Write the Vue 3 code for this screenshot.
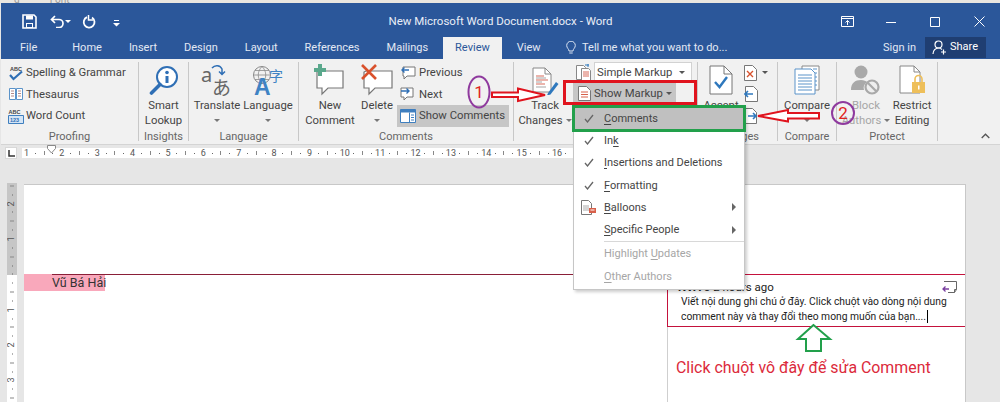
<script setup>
const tabs = ['Home', 'Insert', 'Design', 'Layout', 'References', 'Mailings', 'Review', 'View']
const hCells = []
for (let n = 1; n <= 17; n++) {
  hCells.push({ t: String(n), c: 'num' }, { t: '', c: 'dot' }, { t: '', c: 'tick' }, { t: '', c: 'dot' })
}
const vCells = []
for (let q = -10; q <= 16; q++) {
  const m = ((q % 4) + 4) % 4
  if (q === 0) vCells.push({ t: '', c: 'dot' })
  else if (m === 0) vCells.push({ t: String(Math.abs(q) / 4), c: 'num' })
  else if (m === 2) vCells.push({ t: '', c: 'tick' })
  else vCells.push({ t: '', c: 'dot' })
}
const menu = [
  { k: 'C', r: 'omments', check: true, active: true },
  { p: 'In', k: 'k', r: '', check: true },
  { k: 'I', r: 'nsertions and Deletions', check: true },
  { k: 'F', r: 'ormatting', check: true },
  { k: 'B', r: 'alloons', sub: true, balloon: true },
  { k: 'S', r: 'pecific People', sub: true },
  { sep: true },
  { p: 'Highlight ', k: 'U', r: 'pdates', off: true },
  { k: 'O', r: 'ther Authors', off: true }
]
</script>

<template>
  <div class="app">
    <div class="strip"><span>g</span><span>Font</span></div>

    <header class="titlebar">
      <div class="qat">
        <svg width="15" height="15" viewBox="0 0 15 15"><path d="M1 1h11l2 2v11H1z" fill="none" stroke="#fff" stroke-width="1.6"/><path d="M4 1.500h7v4H4zM4 9h7v5H4z" fill="#fff"/><path d="M5 10h5v3H5z" fill="#2b579a"/></svg>
        <svg class="q-undo" width="15" height="13" viewBox="0 0 15 13"><path d="M5 1 1.500 4.500 5 8M2 4.500h7a4 4 0 0 1 0 8H6" fill="none" stroke="#fff" stroke-width="1.700"/></svg>
        <i class="caret white q-c1"></i>
        <svg class="q-redo" width="14" height="14" viewBox="0 0 14 14"><path d="M5 2.200a5.400 5.400 0 1 0 5 .4" fill="none" stroke="#fff" stroke-width="1.800"/><path d="M6.500 0v5H11" fill="none" stroke="#fff" stroke-width="1.500"/></svg>
        <svg class="q-cust" width="7" height="7" viewBox="0 0 7 7"><path d="M1 0h5v1H1zM0 3h7L3.500 6.500z" fill="#fff"/></svg>
      </div>
      <div class="doc-title">New Microsoft Word Document.docx - Word</div>
      <div class="winctl">
        <svg width="13" height="11" viewBox="0 0 13 11"><path d="M.5.500h12v10H.5zM.5 2.500h12" fill="none" stroke="#fff"/><path d="M6.500 9V4.500M4.500 6.500l2-2 2 2" fill="none" stroke="#fff"/></svg>
        <svg width="10" height="10" viewBox="0 0 10 10"><path d="M0 5.500h10" stroke="#fff"/></svg>
        <svg width="10" height="10" viewBox="0 0 10 10"><path d="M.5.500h9v9h-9z" fill="none" stroke="#fff"/></svg>
        <svg width="11" height="11" viewBox="0 0 11 11"><path d="m.5.500 10 10M10.500.500l-10 10" stroke="#fff"/></svg>
      </div>
    </header>

    <nav class="tabbar">
      <span class="tab file">File</span>
      <span v-for="t in tabs" :key="t" class="tab" :class="{ active: t === 'Review' }">{{ t }}</span>
      <span class="tell">
        <svg width="10" height="14" viewBox="0 0 10 14"><path d="M3 10C3 8 .7 7 .7 4.500a4.300 4.300 0 0 1 8.600 0C9.300 7 7 8 7 10zM3.300 12h3.400" fill="none" stroke="#dbe4f3"/></svg>
        Tell me what you want to do...
      </span>
      <span class="signin">Sign in</span>
      <span class="share">
        <svg width="15" height="15" viewBox="0 0 15 15"><circle cx="6.500" cy="4.500" r="3.500" fill="none" stroke="#fff" stroke-width="1.200"/><path d="M1 14c0-3.500 2.500-6 5.500-6 1.500 0 2.500.5 3.500 1.500M11.500 9.500v5M9 12h5" fill="none" stroke="#fff" stroke-width="1.200"/></svg>
        Share
      </span>
    </nav>

    <section class="ribbon">
      <div class="group g-proof">
        <div class="body col pad-proof">
          <div class="sm">
            <svg width="16" height="16" viewBox="0 0 16 16"><text x="2" y="6" class="mini">ABC</text><path d="M2 10l3.500 4L14 6.500" fill="none" stroke="#2f6fb5" stroke-width="2.200"/></svg>
            <span>Spelling &amp; Grammar</span>
          </div>
          <div class="sm">
            <svg width="16" height="16" viewBox="0 0 16 16"><path d="M1.500 2.500h6v11h-6zM8.500 2.500h6v11h-6z" fill="#fff" stroke="#5b93c9"/><path d="M3 5h3M3 7.500h3M3 10h3M10 5h3M10 7.500h3M10 10h3" stroke="#b48a8a"/></svg>
            <span>Thesaurus</span>
          </div>
          <div class="sm">
            <svg width="16" height="17" viewBox="0 0 16 17"><text x="0.500" y="6.500" class="mini dark">ABC</text><path d="M.5 8.500h15v8H.5z" fill="#d5e5f5" stroke="#3f7fbf"/><text x="2" y="15" class="mini blue">123</text></svg>
            <span>Word Count</span>
          </div>
        </div>
        <div class="label">Proofing</div>
      </div>

      <div class="group g-ins">
        <div class="body center">
          <div class="lg">
            <div class="ic">
              <svg width="30" height="30" viewBox="0 0 30 30"><circle cx="18" cy="12" r="10" fill="#fff" stroke="#2f6fb5" stroke-width="2"/><path d="M11 19.500 2.500 28" stroke="#2f6fb5" stroke-width="3.600" stroke-linecap="round"/><path d="M16.500 11h3v7h-3z" fill="#2f6fb5"/><circle cx="18" cy="7.500" r="1.800" fill="#2f6fb5"/></svg>
            </div>
            <span>Smart</span><span>Lookup</span>
          </div>
        </div>
        <div class="label">Insights</div>
      </div>

      <div class="group g-lang">
        <div class="body lang-body">
          <div class="lg w-lang">
            <div class="ic">
              <svg width="34" height="34" viewBox="0 0 34 34"><text x="1" y="19" class="glyph-a">a</text><text x="12" y="32" class="glyph-jp">あ</text><path d="M12 5c3-3.500 8-3 10 1v5M19 8.500l3 3 3-3" fill="none" stroke="#2f6fb5" stroke-width="1.500"/></svg>
            </div>
            <span>Translate</span><i class="caret"></i>
          </div>
          <div class="lg w-lang2">
            <div class="ic">
              <svg width="34" height="34" viewBox="0 0 34 34"><circle cx="11" cy="12" r="8.500" fill="none" stroke="#8a8a8a"/><path d="M2.500 12h17M11 3.500c-5 5-5 12 0 17M11 3.500c5 5 5 12 0 17M4 7.500h14M4 16.500h14" fill="none" stroke="#8a8a8a" stroke-width=".8"/><text x="3" y="32" class="glyph-big">A</text><text x="18" y="18" class="glyph-zh">字</text></svg>
            </div>
            <span>Language</span><i class="caret"></i>
          </div>
        </div>
        <div class="label">Language</div>
      </div>

      <div class="group g-com">
        <div class="body">
          <div class="lg w-new">
            <div class="ic">
              <svg width="34" height="34" viewBox="0 0 34 34"><path d="M6 8h24v17H15l-6 6v-6H4V9z" fill="#fff" stroke="#777" stroke-width="1.200"/><path d="M5 1h4v4h4v4H9v4H5V9H1V5h4z" fill="#5aa88c"/></svg>
            </div>
            <span>New</span><span>Comment</span>
          </div>
          <div class="lg w-del">
            <div class="ic">
              <svg width="34" height="34" viewBox="0 0 34 34"><path d="M6 8h26v17H15l-6 6v-6H4V9z" fill="#fff" stroke="#777" stroke-width="1.200"/><path d="m2 2 14 14M16 2 2 16" stroke="#d9512c" stroke-width="2.600"/></svg>
            </div>
            <span>Delete</span><i class="caret"></i>
          </div>
          <div class="col com-col">
            <div class="sm in3">
              <svg width="16" height="16" viewBox="0 0 16 16"><path d="M3 2h12v9H7l-3 3v-3H3z" fill="#fff" stroke="#777"/><path d="M9 5H2M4.500 2.500 2 5l2.500 2.500" fill="none" stroke="#2f6fb5" stroke-width="1.400"/></svg>
              <span>Previous</span>
            </div>
            <div class="sm in3">
              <svg width="16" height="16" viewBox="0 0 16 16"><path d="M1 2h12v9H7l-3 3v-3H1z" fill="#fff" stroke="#777"/><path d="M1 5h8M6.500 2.500 9 5 6.500 7.500" fill="none" stroke="#2f6fb5" stroke-width="1.400"/></svg>
              <span>Next</span>
            </div>
            <div class="sm in3 hl">
              <svg width="16" height="14" viewBox="0 0 16 14"><path d="M.5.500h15v13H.5z" fill="#fff" stroke="#3f7fbf"/><path d="M.5.500h15v3H.5z" fill="#3f7fbf"/><path d="M9.500 3.500v10M11 6h3M11 8.500h3M11 11h3" stroke="#3f7fbf"/></svg>
              <span>Show Comments</span>
            </div>
          </div>
        </div>
        <div class="label">Comments</div>
      </div>

      <div class="group g-track">
        <div class="body">
          <div class="lg w-track">
            <div class="ic">
              <svg width="28" height="30" viewBox="0 0 28 30"><path d="M2 3h12l6 6v18H2z" fill="#fff" stroke="#888"/><path d="M14 3v6h6" fill="none" stroke="#888"/><path d="M5 11h8M5 15h12M5 19h9" stroke="#d86a5a" stroke-width="1.200"/><path d="M5 13h10M5 17h6M5 22h10" stroke="#a5a5a5"/><path d="m17 28 8-11 2.500 2-8 10.500-3.500 1z" fill="#2f78bd"/></svg>
            </div>
            <span>Track</span><span class="with-caret">Changes<i class="caret"></i></span>
          </div>
          <div class="col track-col">
            <div class="mark-row">
              <svg width="15" height="17" viewBox="0 0 15 17"><path d="M.5 1.500h7l2 2v12H.5z" fill="#fff" stroke="#888"/><path d="M5.500 4.500h7l2 2v10h-9z" fill="#fff" stroke="#888"/><path d="M7 8h6M7 10h6M7 12h6" stroke="#d86a5a"/><path d="M9 1h4M12 0v3" stroke="#2f78bd"/></svg>
              <div class="select"><span>Simple Markup</span><i class="caret"></i></div>
            </div>
            <div class="showmarkup">
              <svg width="13" height="15" viewBox="0 0 13 15"><path d="M.5.500h8l4 4v10H.5z" fill="#fff" stroke="#777"/><path d="M3 6h7M3 8.500h7M3 11h7" stroke="#d8604a"/></svg>
              <span>Show Markup</span><i class="caret dark"></i>
            </div>
          </div>
        </div>
        <div class="label"></div>
      </div>

      <div class="group g-chg">
        <div class="body">
          <div class="lg w-acc">
            <div class="ic">
              <svg width="24" height="30" viewBox="0 0 24 30"><path d="M1 1h14l8 8v20H1z" fill="#fff" stroke="#777"/><path d="M15 1v8h8" fill="none" stroke="#777"/><path d="m6 17 4.500 5L18 12" fill="none" stroke="#2f78bd" stroke-width="2.400"/></svg>
            </div>
            <span>Accept</span>
          </div>
          <div class="col chg-col">
            <div class="chg">
              <svg width="14" height="16" viewBox="0 0 14 16"><path d="M.5.500h8l4 4v11H.5z" fill="#fff" stroke="#777"/><path d="m3 6 6 6M9 6l-6 6" stroke="#d8512c" stroke-width="1.400"/></svg>
              <i class="caret dark"></i>
            </div>
            <div class="chg">
              <svg width="14" height="16" viewBox="0 0 14 16"><path d="M1.500.500h8l4 4v11h-12z" fill="#fff" stroke="#777"/><path d="M9 8H1M4 5 1 8l3 3" fill="none" stroke="#2f78bd" stroke-width="1.600"/></svg>
            </div>
            <div class="chg">
              <svg width="14" height="16" viewBox="0 0 14 16"><path d="M.5.500h8l4 4v11H.5z" fill="#fff" stroke="#777"/><path d="M4 8h8M9 5l3 3-3 3" fill="none" stroke="#2f78bd" stroke-width="1.600"/></svg>
            </div>
          </div>
        </div>
        <div class="label chg-label">Changes</div>
      </div>

      <div class="group g-cmp">
        <div class="body center">
          <div class="lg">
            <div class="ic">
              <svg width="26" height="30" viewBox="0 0 26 30"><path d="M8 1h17v24H8z" fill="#fff" stroke="#888"/><path d="M1 4h16l4 4v21H1z" fill="#fff" stroke="#5b93c9"/><path d="M4 10h14M4 13h14M4 16h14M4 19h14M4 22h14M4 25h14M19 4h4M21 8h2M21 12h2M21 16h2M21 20h2" stroke="#5b93c9"/></svg>
            </div>
            <span>Compare</span><i class="caret"></i>
          </div>
        </div>
        <div class="label">Compare</div>
      </div>

      <div class="group g-prot">
        <div class="body">
          <div class="lg w-block off">
            <div class="ic">
              <svg width="30" height="30" viewBox="0 0 30 30"><circle cx="10" cy="7" r="6.500" fill="#a9a9a9"/><path d="M0 25c0-7 4-10 10-10 3 0 5 1 6 2-3 2-4 5-3 8z" fill="#a9a9a9"/><circle cx="21" cy="22" r="6.500" fill="#eee" stroke="#a9a9a9" stroke-width="2.200"/><path d="m16.500 17.500 9 9" stroke="#a9a9a9" stroke-width="2.200"/></svg>
            </div>
            <span>Block</span><span class="with-caret">Authors<i class="caret"></i></span>
          </div>
          <div class="lg w-rest">
            <div class="ic">
              <svg width="30" height="30" viewBox="0 0 30 30"><path d="M3 1h14l6 6v21H3z" fill="#fff" stroke="#888"/><path d="M17 1v6h6" fill="none" stroke="#888"/><path d="M15 17h13v11H15z" fill="#eebf5a"/><path d="M18 17v-3a3.500 3.500 0 0 1 7 0v3" fill="none" stroke="#eebf5a" stroke-width="1.600"/><path d="M21 20.500h1.500v4H21z" fill="#fff"/></svg>
            </div>
            <span>Restrict</span><span>Editing</span>
          </div>
        </div>
        <div class="label">Protect</div>
      </div>

      <div class="tail">
        <svg width="9" height="6" viewBox="0 0 9 6"><path d="m.7 5 3.800-3.800L8.300 5" fill="none" stroke="#555" stroke-width="1.300"/></svg>
      </div>
    </section>

    <main class="work">
      <div class="hrow">
        <div class="lbtn"><svg width="7" height="7" viewBox="0 0 7 7"><path d="M1 0v6h6" fill="none" stroke="#333" stroke-width="1.500"/></svg></div>
        <div class="hruler">
          <span v-for="(c, i) in hCells" :key="i" class="hc" :class="c.c">{{ c.t }}</span>
          <svg class="indent" width="9" height="9" viewBox="0 0 9 9"><path d="M.5.500h8v3L4.500 8 .5 3.500z" fill="#fff" stroke="#888"/></svg>
        </div>
      </div>
      <div class="drow">
        <div class="vruler">
          <span v-for="(c, i) in vCells" :key="i" class="vc" :class="c.c"><b>{{ c.t }}</b></span>
        </div>
        <div class="page">
          <div class="main">
            <div class="mline"></div>
            <div class="author-hl">Vũ Bá Hải</div>
          </div>
          <aside class="pane">
            <div class="cbox">
              <div class="chead">
                <span><b>NVA</b> ở 2 hours ago</span>
                <svg width="15" height="12" viewBox="0 0 15 12"><path d="M2 .5h12.500v8l-2 3H6" fill="none" stroke="#666"/><path d="M12.500 11.500v-3h2" fill="none" stroke="#666"/><path d="M7 8H1M3.500 5.500 1 8l2.500 2.500" fill="none" stroke="#7a3fa0" stroke-width="1.300"/></svg>
              </div>
              <p class="ctext">Viết nội dung ghi chú ở đây. Click chuột vào dòng nội dung<br>comment này và thay đổi theo mong muốn của bạn....<i class="cursor"></i></p>
            </div>
            <p class="note">Click chuột vô đây để sửa Comment</p>
          </aside>
        </div>
      </div>
    </main>

    <div class="menu">
      <template v-for="(m, i) in menu" :key="i">
        <div v-if="m.sep" class="msep"></div>
        <div v-else class="mrow" :class="{ active: m.active, off: m.off }">
          <span class="mcheck">
            <svg v-if="m.check" width="10" height="9" viewBox="0 0 10 9"><path d="m1 5 2.500 3L9 1" fill="none" stroke="#666" stroke-width="1.300"/></svg>
            <svg v-if="m.balloon" width="16" height="15" viewBox="0 0 16 15"><path d="M.5.500h7l3 3v11H.5z" fill="#fff" stroke="#777"/><path d="M2 6h6M2 8h6M2 10h6" stroke="#aaa"/><path d="M8 8h7v5H8z" fill="#d8604a"/><path d="M9.500 10h4" stroke="#fff"/></svg>
          </span>
          <span class="mtxt">{{ m.p }}<u>{{ m.k }}</u>{{ m.r }}</span>
          <i v-if="m.sub" class="msub"></i>
        </div>
      </template>
    </div>

    <div class="box-red"></div>
    <div class="box-green"></div>

    <svg class="notes" width="1000" height="402" viewBox="0 0 1000 402">
      <ellipse cx="479" cy="92" rx="10.500" ry="15.500" fill="none" stroke="#8f3a9e" stroke-width="2"/>
      <text x="479" y="98" class="digit">1</text>
      <path d="M492 92.500h26v-4l27 6.500-27 6v-4h-26z" fill="#fff" stroke="#e0141e" stroke-width="2"/>
      <circle cx="843" cy="113" r="11" fill="none" stroke="#8f3a9e" stroke-width="2"/>
      <text x="843" y="119" class="digit">2</text>
      <path d="M819 113h-31v-3l-30 6 30 5.500v-3h31z" fill="#fff" stroke="#e0141e" stroke-width="2"/>
      <path d="M813.500 325 798 339h8v12h15v-12h9z" fill="#fff" stroke="#22a04b" stroke-width="2"/>
    </svg>
  </div>
</template>

<style>
html, body { margin: 0; padding: 0; background: #e6e6e6; }
</style>

<style scoped>
.app { position: relative; width: 1000px; height: 402px; overflow: hidden; display: flex; flex-direction: column; background: #e6e6e6; font-family: Roboto, "Noto Sans", sans-serif; font-size: 11.300px; color: #444; }
.strip { height: 3px; background: #e9e6e0; overflow: hidden; display: flex; gap: 30px; padding-left: 14px; font-size: 10px; line-height: 0; color: #999; }
.titlebar { height: 34px; background: #2b579a; margin-left: 1px; display: flex; align-items: center; position: relative; color: #fff; }
.qat { display: flex; align-items: center; padding-left: 21px; padding-top: 3px; }
.q-undo { margin-left: 13px; }
.q-c1 { margin-left: 6px; }
.q-redo { margin-left: 11px; }
.q-cust { margin-left: 17px; margin-top: 3px; }
.doc-title { position: absolute; left: 0; right: 0; top: 10px; text-align: center; font-size: 11.500px; line-height: 16px; color: #e9eef7; }
.winctl { margin-left: auto; display: flex; align-items: center; padding-right: 15px; padding-top: 3px; }
.winctl svg:nth-child(2) { margin-left: 32px; }
.winctl svg:nth-child(3) { margin-left: 34px; }
.winctl svg:nth-child(4) { margin-left: 34px; }
.tabbar { height: 22px; background: #2b579a; margin-left: 1px; display: flex; align-items: stretch; color: #e3e9f4; font-size: 11px; line-height: 22px; white-space: nowrap; }
.tab { padding: 0 13.500px; }
.tab.file { padding: 0 21.500px 0 19px; }
.tab.active { background: #f1f1f1; color: #2b579a; padding: 0 12px; margin: 0 1.500px; }
.tell { display: flex; align-items: center; gap: 6px; margin-left: 12px; }
.signin { margin-left: auto; }
.share { margin: -1px 14px 1px 9px; padding: 0 8px 0 7px; background: #1f3e72; display: flex; align-items: center; gap: 3px; color: #fff; }
.ribbon { height: 86px; box-sizing: border-box; background: #f1f1f1; margin-left: 1px; padding-top: 3px; border-bottom: 1px solid #d4d4d4; display: flex; align-items: flex-start; }
.group { height: 79px; box-sizing: content-box; border-right: 1px solid #c8c8c8; display: flex; flex-direction: column; flex: none; }
.body { flex: 1; display: flex; min-height: 0; }
.body.center { justify-content: center; }
.col { display: flex; flex-direction: column; }
.label { height: 14px; line-height: 14px; margin-bottom: -3px; margin-top: -2px; text-align: center; color: #666; font-size: 11px; white-space: nowrap; }
.g-proof { width: 137px; }
.g-ins { width: 49px; }
.g-lang { width: 109px; }
.g-com { width: 214px; }
.g-track { width: 183px; }
.g-chg { width: 79px; }
.g-cmp { width: 58px; }
.g-prot { width: 100px; }
.tail { flex: 1; display: flex; justify-content: flex-end; padding: 71px 10px 0 0; }
.pad-proof { padding-left: 7px; }
.sm { height: 21.500px; flex: none; display: flex; align-items: center; gap: 2px; white-space: nowrap; }
.sm svg { flex: none; }
.in3 { padding-left: 2px; gap: 3px; }
.hl { background: #c6c6c6; margin-left: -1px; padding-left: 3px; width: 109px; }
.com-col { margin-left: 5px; width: 112px; }
.lg { display: flex; flex-direction: column; align-items: center; line-height: 15px; white-space: nowrap; }
.ic { height: 36px; flex: none; display: flex; align-items: center; justify-content: center; }
.w-lang { width: 54px; }
.w-lang2 { width: 48px; }
.lang-body { padding-left: 1px; }
.w-new { width: 62px; }
.w-del { width: 32px; }
.w-track { width: 62px; }
.track-col { width: 121px; }
.mark-row { height: 21px; display: flex; align-items: center; gap: 3px; }
.select { width: 98px; height: 21px; box-sizing: border-box; background: #fff; border: 1px solid #d2d2d2; display: flex; align-items: center; justify-content: space-between; padding: 0 6px 0 2px; }
.showmarkup { width: 103px; height: 20px; margin-left: -3px; background: #c6c6c6; display: flex; align-items: center; gap: 3px; padding-left: 5px; box-sizing: border-box; white-space: nowrap; }
.showmarkup .caret { margin-left: 2px; }
.w-acc { width: 46px; }
.chg { height: 21.500px; flex: none; display: flex; align-items: center; gap: 4px; }
.w-block { width: 58px; }
.w-rest { width: 34px; }
.off { color: #a6a6a6; }
.with-caret { display: inline-flex; align-items: center; gap: 3px; }
.caret { display: block; width: 0; height: 0; border: 3px solid transparent; border-top: 3.500px solid #777; border-bottom: 0; margin: 6px 0; }
.with-caret .caret { margin: 0; }
.caret.white { border-top-color: #fff; margin: 0; }
.caret.dark { border-top-color: #555; margin: 0; }
.select .caret { margin: 0; border-top-color: #555; }
.mini { font: bold 5.500px "Liberation Sans", sans-serif; fill: #444; }
.mini.blue { fill: #2f6fb5; }
.glyph-a { font: 20px "Noto Sans", sans-serif; fill: #666; }
.glyph-jp { font: 19px "Noto Sans CJK JP", sans-serif; fill: #666; }
.glyph-big { font: bold 23px "Liberation Sans", sans-serif; fill: #3f83c4; }
.glyph-zh { font: 14px "Noto Sans CJK SC", sans-serif; fill: #3f83c4; }

.work { flex: 1; display: flex; flex-direction: column; min-height: 0; }
.hrow { height: 39px; display: flex; align-items: flex-start; padding: 2px 0 0 5px; box-sizing: border-box; }
.lbtn { width: 12px; height: 12px; background: #fff; border: 1px solid #d8d8d8; box-sizing: border-box; display: flex; align-items: center; justify-content: center; }
.hruler { position: relative; margin: 1px 0 0 5px; width: 560px; height: 10px; background: #fff; display: flex; overflow: visible; }
.hc { flex: none; width: 8.850px; display: flex; align-items: center; justify-content: center; font-size: 9px; line-height: 10px; color: #555; }
.hc.dot::before { content: ""; width: 1px; height: 1px; background: #666; }
.hc.tick::before { content: ""; width: 1px; height: 4px; background: #888; }
.indent { position: absolute; left: 25px; top: -3px; }
.drow { flex: 1; display: flex; min-height: 0; padding-left: 7px; }
.vruler { width: 10px; height: 219px; background: linear-gradient(#c6c6c6 0, #c6c6c6 92px, #fff 92px); overflow: hidden; display: flex; flex-direction: column; margin-top: -1px; }
.vc { flex: none; height: 8.850px; display: flex; align-items: center; justify-content: center; color: #555; font-size: 9px; transform: translateY(-1.500px); }
.vc b { font-weight: 400; display: block; line-height: 9px; transform: rotate(-90deg); }
.vc.dot::before { content: ""; width: 1px; height: 1px; background: #666; }
.vc.tick::before { content: ""; width: 4px; height: 1px; background: #888; }
.page { margin-left: 7px; width: 942px; height: 218px; box-sizing: border-box; background: #fff; border-top: 1px solid #c8c8c8; border-right: 1px solid #c8c8c8; display: flex; }
.main { width: 643px; padding-top: 89px; box-sizing: border-box; flex: none; }
.mline { margin-left: 28px; height: 1px; background: #8a1f38; position: relative; margin-bottom: -1px; }
.author-hl { width: 81px; box-sizing: border-box; height: 17px; line-height: 17px; padding-left: 28px; background: #f9a8bb; font-size: 12.500px; color: #333; white-space: nowrap; }
.pane { flex: 1; border-left: 1px solid #cfcfcf; padding-top: 89px; min-width: 0; }
.cbox { height: 53px; box-sizing: border-box; margin-left: -1px; border: solid #c4123c; border-width: 1px 0 1px 1px; padding: 6px 8px 0 10px; color: #222; }
.chead { display: flex; justify-content: space-between; align-items: flex-start; height: 13px; line-height: 13px; font-size: 11.500px; white-space: nowrap; }
.ctext { margin: 0; padding-left: 3px; font-size: 10.300px; line-height: 15px; white-space: nowrap; color: #222; }
.cursor { display: inline-block; width: 1px; height: 13px; background: #000; vertical-align: -3px; margin-left: 1px; }
.note { margin: 30px 0 0 8px; font-size: 15.900px; line-height: 22px; color: #dc2a3b; white-space: nowrap; }

.menu { position: absolute; z-index: 2; left: 573px; top: 105px; width: 172px; height: 185px; box-sizing: border-box; background: #fff; border: 1px solid #c6c6c6; padding-top: 1px; box-shadow: 2px 2px 3px rgba(0,0,0,.2); color: #444; }
.mrow { height: 22.300px; display: flex; align-items: center; position: relative; white-space: nowrap; font-size: 11px; }
.mrow.active { background: #c0c0c0; }
.mrow.off { color: #a6a6a6; }
.mrow u { text-underline-offset: 2px; }
.mcheck { width: 30px; flex: none; display: flex; justify-content: center; }
.msub { position: absolute; right: 8px; width: 0; height: 0; border: 4px solid transparent; border-left: 4px solid #666; border-right: 0; }
.msep { height: 1px; background: #d8d8d8; margin: 0 0 1px 30px; }
.box-red { position: absolute; z-index: 3; left: 563px; top: 80px; width: 134px; height: 25px; box-sizing: border-box; border: 3px solid #e0141e; }
.box-green { position: absolute; z-index: 3; left: 572px; top: 105px; width: 174px; height: 27px; box-sizing: border-box; border: 3px solid #22a04b; }
.notes { position: absolute; z-index: 4; left: 0; top: 0; pointer-events: none; }
.digit { font: 17px Roboto, sans-serif; fill: #e0241e; text-anchor: middle; }
</style>
